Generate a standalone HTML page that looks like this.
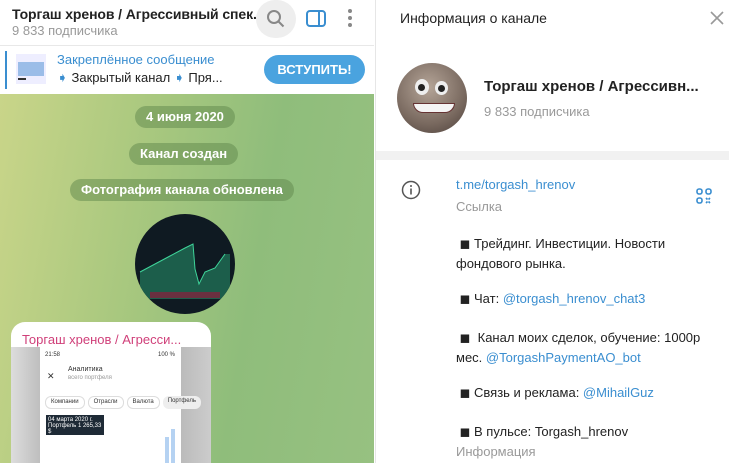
<!DOCTYPE html>
<html><head><meta charset="utf-8"><style>
*{margin:0;padding:0;box-sizing:border-box}
body{width:729px;height:463px;overflow:hidden;font-family:"Liberation Sans","DejaVu Sans",sans-serif;background:#fff;position:relative}
.left{position:absolute;left:0;top:0;width:374px;height:463px;overflow:hidden}
.hdr{position:absolute;left:0;top:0;width:374px;height:46px;background:#fff;border-bottom:1px solid #e8e8e8}
.t1{position:absolute;left:12px;top:6px;font-size:14px;font-weight:bold;color:#222;letter-spacing:-0.1px}
.t2{position:absolute;left:12px;top:23px;font-size:13px;color:#999}
.pin{position:absolute;left:0;top:46px;width:374px;height:48px;background:#fff}
.chat{position:absolute;left:0;top:94px;width:374px;height:369px;background:linear-gradient(100deg,#c9d589 0%,#a9c87f 35%,#8fbd7b 65%,#97c181 100%)}
.pill{position:absolute;background:rgba(95,135,75,.5);color:#fff;font-size:13px;font-weight:bold;height:22px;line-height:22px;border-radius:11px;padding:0 11px}
.right{position:absolute;left:375px;top:0;width:354px;height:463px;background:#fff;border-left:1px solid #e6e6e6}
a{color:#3a8ed0;text-decoration:none}
.ln{position:absolute;left:80px;font-size:13px;color:#222}
</style></head><body>
<div class="left">
<div class="hdr">
<div class="t1">Торгаш хренов / Агрессивный спек...</div>
<div class="t2">9 833 подписчика</div>
<div style="position:absolute;left:256px;top:0;width:40px;height:38px;border-radius:20px;background:#eee"></div>
<svg style="position:absolute;left:265px;top:8px" width="22" height="22" viewBox="0 0 22 22"><circle cx="9" cy="9" r="6" fill="none" stroke="#888" stroke-width="2"/><path d="M13.5 13.5l5 5" stroke="#888" stroke-width="2"/></svg>
<svg style="position:absolute;left:306px;top:10px" width="20" height="18" viewBox="0 0 20 18"><rect x="1" y="1" width="18" height="15" rx="3" fill="none" stroke="#3a8ed0" stroke-width="2"/><rect x="12" y="1" width="2" height="15" fill="#3a8ed0"/></svg>
<svg style="position:absolute;left:347px;top:8px" width="6" height="20"><circle cx="3" cy="3" r="2" fill="#888"/><circle cx="3" cy="10" r="2" fill="#888"/><circle cx="3" cy="17" r="2" fill="#888"/></svg>
</div>
<div class="pin">
<div style="position:absolute;left:5px;top:5px;width:2px;height:38px;background:#3a8ed0"></div>
<div style="position:absolute;left:16px;top:8px;width:30px;height:30px;background:#eef;overflow:hidden"><div style="position:absolute;left:2px;top:8px;width:26px;height:14px;background:#9bbde8"></div><div style="position:absolute;left:2px;top:24px;width:8px;height:2px;background:#333"></div></div>
<div style="position:absolute;left:57px;top:6px;font-size:13px;color:#3a8ed0">Закреплённое сообщение</div>
<div style="position:absolute;left:57px;top:24px;font-size:13px;color:#222"><span style="color:#3a8ed0">➧</span> Закрытый канал <span style="color:#3a8ed0">➧</span> Пря...</div>
<div style="position:absolute;left:264px;top:9px;width:101px;height:29px;border-radius:15px;background:#4aa3df;color:#fff;font-size:13px;font-weight:bold;text-align:center;line-height:29px">ВСТУПИТЬ!</div>
</div>
<div class="chat">
<div class="pill" style="left:135px;top:12px">4 июня 2020</div>
<div class="pill" style="left:129px;top:49px">Канал создан</div>
<div class="pill" style="left:70px;top:85px">Фотография канала обновлена</div>
<div style="position:absolute;left:135px;top:120px;width:100px;height:100px;border-radius:50%;background:#0f1a22;overflow:hidden">
<svg width="100" height="100"><path d="M5 58 L20 50 L35 42 L50 34 L58 30 L60 55 L64 70 L70 58 L80 54 L90 40 L95 40 L95 85 L5 85Z" fill="#1c5e4b"/><path d="M5 58 L20 50 L35 42 L50 34 L58 30 L60 55 L64 70 L70 58 L80 54 L90 40" stroke="#3fd49a" fill="none"/><rect x="15" y="78" width="70" height="6" fill="#6a3040"/></svg></div>
<div style="position:absolute;left:11px;top:228px;width:200px;height:150px;background:#fff;border-radius:14px 14px 0 0;overflow:hidden">
<div style="position:absolute;left:11px;top:10px;font-size:13px;color:#d0407a">Торгаш хренов / Агресси...</div>
<div style="position:absolute;left:0;top:25px;width:200px;height:130px;background:linear-gradient(90deg,#ddd,#888 40%,#ccc)"></div>
<div style="position:absolute;left:29px;top:25px;width:141px;height:130px;background:#fff;font-size:6px;color:#333">
<div style="position:absolute;left:5px;top:5px">21:58</div><div style="position:absolute;right:6px;top:5px">100 %</div>
<div style="position:absolute;left:7px;top:24px;font-size:9px">✕</div>
<div style="position:absolute;left:28px;top:19px;font-size:7px">Аналитика</div>
<div style="position:absolute;left:28px;top:28px;color:#999">всего портфеля</div>
<div style="position:absolute;left:5px;top:49px;width:130px;height:13px;display:flex;gap:3px"><span style="border:1px solid #ddd;border-radius:6px;padding:2px 5px">Компании</span><span style="border:1px solid #ddd;border-radius:6px;padding:2px 5px">Отрасли</span><span style="border:1px solid #ddd;border-radius:6px;padding:2px 5px">Валюта</span><span style="background:#eee;border-radius:6px;padding:2px 5px">Портфель</span></div>
<div style="position:absolute;left:6px;top:68px;width:58px;height:20px;background:#1e2a36;color:#fff;padding:2px">04 марта 2020 г.<br>Портфель 1 265,33 $</div>
<div style="position:absolute;left:125px;top:90px;width:4px;height:40px;background:#b5d2f2"></div><div style="position:absolute;left:131px;top:82px;width:4px;height:48px;background:#b5d2f2"></div>
</div></div>
</div>
</div>
<div class="right">
<div style="position:absolute;left:24px;top:10px;font-size:14px;color:#222">Информация о канале</div>
<svg style="position:absolute;left:334px;top:11px" width="14" height="14"><path d="M1 1L13 13M13 1L1 13" stroke="#999" stroke-width="1.6"/></svg>
<div style="position:absolute;left:21px;top:63px;width:70px;height:70px;border-radius:50%;background:radial-gradient(circle at 45% 35%,#b5a598,#7a6a60 60%,#4a3d38)">
<div style="position:absolute;left:18px;top:16px;width:14px;height:16px;border-radius:50%;background:#eee"><div style="margin:5px 3px;width:7px;height:7px;border-radius:50%;background:#222"></div></div>
<div style="position:absolute;left:38px;top:18px;width:13px;height:14px;border-radius:50%;background:#eee"><div style="margin:4px 3px;width:7px;height:7px;border-radius:50%;background:#222"></div></div>
<div style="position:absolute;left:16px;top:40px;width:42px;height:10px;border-radius:0 0 20px 20px;background:#f4f4f4;border:1px solid #633"></div></div>
<div style="position:absolute;left:108px;top:78px;font-size:15px;font-weight:bold;color:#222">Торгаш хренов / Агрессивн...</div>
<div style="position:absolute;left:108px;top:104px;font-size:13px;color:#999">9 833 подписчика</div>
<div style="position:absolute;left:0;top:151px;width:354px;height:9px;background:#f1f1f1"></div>
<svg style="position:absolute;left:25px;top:180px" width="20" height="20"><circle cx="10" cy="10" r="8.5" fill="none" stroke="#555" stroke-width="1.5"/><rect x="9.2" y="8.5" width="1.6" height="6" fill="#555"/><circle cx="10" cy="6" r="1" fill="#555"/></svg>
<svg style="position:absolute;left:320px;top:188px" width="16" height="16" viewBox="0 0 16 16" fill="none" stroke="#3a8ed0" stroke-width="1.6"><rect x="1" y="1" width="5" height="5" rx="2"/><rect x="10" y="1" width="5" height="5" rx="2"/><rect x="1" y="10" width="5" height="5" rx="2"/><path d="M10 10l1.5 1.5M14 10l-1.5 1.5M10 15l1.5-1.5M14 15l-1.5-1.5"/></svg>
<div class="ln" style="top:177px"><a>t.me/torgash_hrenov</a></div>
<div class="ln" style="top:199px;color:#999">Ссылка</div>
<div class="ln" style="top:234px;line-height:20px">&nbsp;◼ Трейдинг. Инвестиции. Новости<br>фондового рынка.</div>
<div class="ln" style="top:291px">&nbsp;◼ Чат: <a>@torgash_hrenov_chat3</a></div>
<div class="ln" style="top:328px;line-height:20px">&nbsp;◼&nbsp; Канал моих сделок, обучение: 1000р<br>мес. <a>@TorgashPaymentAO_bot</a></div>
<div class="ln" style="top:385px">&nbsp;◼ Связь и реклама: <a>@MihailGuz</a></div>
<div class="ln" style="top:424px">&nbsp;◼ В пульсе: Torgash_hrenov</div>
<div class="ln" style="top:444px;color:#999">Информация</div>
</div>
</body></html>
